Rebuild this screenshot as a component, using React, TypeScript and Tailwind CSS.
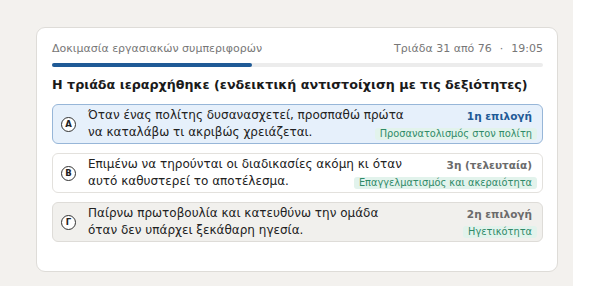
import React from "react";

const font = { fontFamily: '"DejaVu Sans", sans-serif' };

type Opt = {
  letter: string;
  l1: string;
  l2: string;
  rank: string;
  tag: string;
  variant: "blue" | "white" | "gray";
};

const opts: Opt[] = [
  {
    letter: "A",
    l1: "Όταν ένας πολίτης δυσανασχετεί, προσπαθώ πρώτα",
    l2: "να καταλάβω τι ακριβώς χρειάζεται.",
    rank: "1η επιλογή",
    tag: "Προσανατολισμός στον πολίτη",
    variant: "blue",
  },
  {
    letter: "B",
    l1: "Επιμένω να τηρούνται οι διαδικασίες ακόμη κι όταν",
    l2: "αυτό καθυστερεί το αποτέλεσμα.",
    rank: "3η (τελευταία)",
    tag: "Επαγγελματισμός και ακεραιότητα",
    variant: "white",
  },
  {
    letter: "Γ",
    l1: "Παίρνω πρωτοβουλία και κατευθύνω την ομάδα",
    l2: "όταν δεν υπάρχει ξεκάθαρη ηγεσία.",
    rank: "2η επιλογή",
    tag: "Ηγετικότητα",
    variant: "gray",
  },
];

function Option({ o }: { o: Opt }) {
  const box =
    o.variant === "blue"
      ? "bg-[#e6f0fb] border-[#97b6d8]"
      : o.variant === "white"
      ? "bg-white border-[#e3e1dd]"
      : "bg-[#f1f0ed] border-[#dedcd8]";
  const rankColor = o.variant === "blue" ? "text-[#1f5a96]" : "text-[#6b6b6b]";
  return (
    <div className={`h-[40px] flex items-center rounded-[6px] border pl-[8px] pr-[5px] ${box}`}>
      <div className="w-[15px] h-[15px] rounded-full border-[1.5px] border-[#333] bg-white flex items-center justify-center text-[8.5px] font-bold text-[#222] shrink-0">
        {o.letter}
      </div>
      <div className="ml-[12px] flex-1 flex flex-col gap-[2px] whitespace-nowrap">
        <div className="flex items-center justify-between h-[15px]">
          <span className="text-[12px] leading-[15px] text-[#222]">{o.l1}</span>
          <span className={`mr-[5px] text-[10.5px] leading-[14px] font-bold ${rankColor}`}>{o.rank}</span>
        </div>
        <div className="flex items-center justify-between h-[15px]">
          <span className="text-[12px] leading-[15px] text-[#222]">{o.l2}</span>
          <span className="mt-[2px] text-[9.8px] leading-[12px] px-[5px] rounded-[3px] bg-[#e2f3ec] text-[#2f8a68]">
            {o.tag}
          </span>
        </div>
      </div>
    </div>
  );
}

export default function App() {
  return (
    <div style={font} className="w-[573px] h-[286px] bg-[#f3f1ee] pl-[36px] pt-[27px]">
      <div className="w-[522px] h-[245px] bg-white border border-[#dedcd8] rounded-[9px] pl-[15px] pr-[14px] pt-[14px]">
        <div className="flex justify-between text-[11px] leading-[14px] text-[#777]">
          <span>Δοκιμασία εργασιακών συμπεριφορών</span>
          <span>
            Τριάδα 31 από 76<span className="mx-[8px]">·</span>19:05
          </span>
        </div>
        <div className="mt-[7px] h-[4px] rounded-full bg-[#ececec]">
          <div className="h-full rounded-full bg-[#1f5a96]" style={{ width: `${(31 / 76) * 100}%` }} />
        </div>
        <div className="mt-[9px] text-[12.7px] leading-[18px] font-bold text-[#1a1a1a]">
          Η τριάδα ιεραρχήθηκε (ενδεικτική αντιστοίχιση με τις δεξιότητες)
        </div>
        <div className="mt-[10px] flex flex-col gap-[9px]">
          {opts.map((o) => (
            <Option key={o.letter} o={o} />
          ))}
        </div>
      </div>
    </div>
  );
}
